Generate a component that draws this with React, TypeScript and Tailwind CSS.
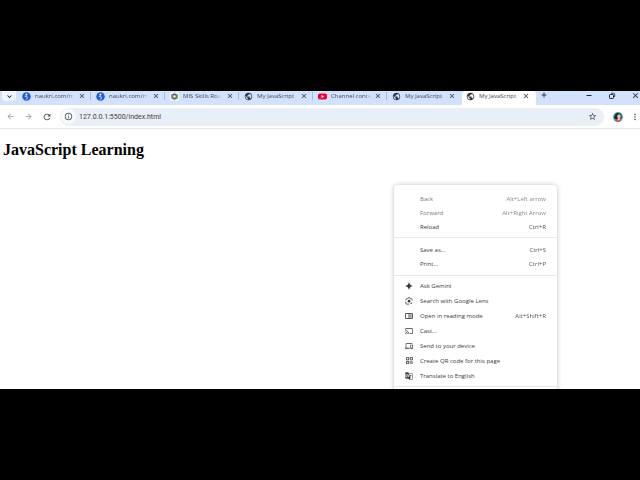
import type { ReactNode } from "react";
import {
  MdArrowBack,
  MdArrowForward,
  MdCast,
  MdClose,
  MdGTranslate,
  MdInfoOutline,
  MdKeyboardArrowDown,
  MdMoreVert,
  MdOutlineDevices,
  MdPublic,
  MdQrCode,
  MdRefresh,
  MdStarBorder,
} from "react-icons/md";

type TabIcon = "naukri" | "mis" | "globe" | "youtube";

const tabs: { icon: TabIcon; title: string; active?: boolean }[] = [
  { icon: "naukri", title: "naukri.com/m" },
  { icon: "naukri", title: "naukri.com/m" },
  { icon: "mis", title: "MIS Skills Roa" },
  { icon: "globe", title: "My JavaScript" },
  { icon: "youtube", title: "Channel conte" },
  { icon: "globe", title: "My JavaScript" },
  { icon: "globe", title: "My JavaScript", active: true },
];

function Favicon({ icon }: { icon: TabIcon }) {
  if (icon === "globe") {
    return <MdPublic className="size-[9px] shrink-0 text-[#2f3944]" />;
  }
  if (icon === "youtube") {
    return (
      <svg viewBox="0 0 18 18" className="size-[9px] shrink-0">
        <rect x="0" y="3" width="18" height="12" rx="3.5" fill="#f00033" />
        <path d="M7 6l5.5 3L7 12z" fill="#fff" />
      </svg>
    );
  }
  if (icon === "mis") {
    return (
      <svg viewBox="0 0 18 18" className="size-[9px] shrink-0">
        <rect width="18" height="18" rx="4" fill="#f3f5f4" />
        <g fill="none" stroke="#59635a" strokeWidth="1.6">
          <ellipse cx="9" cy="9" rx="3.4" ry="6.6" />
          <ellipse cx="9" cy="9" rx="3.4" ry="6.6" transform="rotate(60 9 9)" />
          <ellipse cx="9" cy="9" rx="3.4" ry="6.6" transform="rotate(120 9 9)" />
        </g>
      </svg>
    );
  }
  return (
    <svg viewBox="0 0 18 18" className="size-[9px] shrink-0">
      <circle cx="9" cy="9" r="8.5" fill="#1f5bd8" />
      <circle cx="9" cy="5" r="2" fill="#fff" />
      <path d="M5.5 8.6c3-.6 5 .2 5 2.4 0 1.6-1 2.6-2 4" fill="none" stroke="#fff" strokeWidth="2" />
    </svg>
  );
}

function GeminiIcon() {
  return (
    <svg viewBox="0 0 24 24" className="size-[8px]" fill="currentColor">
      <path d="M12 0c1.6 7.500 4.500 10.400 12 12-7.500 1.600-10.400 4.500-12 12-1.600-7.500-4.500-10.400-12-12C7.500 10.400 10.400 7.500 12 0z" />
    </svg>
  );
}

function LensIcon() {
  return (
    <svg viewBox="0 0 24 24" className="size-[8px]">
      <g fill="none" stroke="currentColor" strokeWidth="2.4">
        <path d="M2.500 10V8a3 3 0 0 1 3-3h2l1.500-2.500h6L16.500 5h2a3 3 0 0 1 3 3v3" />
        <path d="M2.500 14v4.500a3 3 0 0 0 3 3H12" />
      </g>
      <circle cx="12" cy="12.500" r="4" fill="currentColor" />
      <circle cx="18.500" cy="19" r="2.300" fill="currentColor" />
    </svg>
  );
}

function ReadingIcon() {
  return (
    <svg viewBox="0 0 24 24" className="size-[8px]" fill="none" stroke="currentColor" strokeWidth="2.4">
      <path d="M1.500 4.500h21v15h-21zM12 4.500v15" />
      <path d="M14 8.500h6.500M14 12h6.500M14 15.500h6.500" strokeWidth="1.8" />
    </svg>
  );
}

type MenuEntry = {
  label: string;
  shortcut?: string;
  icon?: ReactNode;
  disabled?: boolean;
};

const navItems: MenuEntry[] = [
  { label: "Back", shortcut: "Alt+Left arrow", disabled: true },
  { label: "Forward", shortcut: "Alt+Right Arrow", disabled: true },
  { label: "Reload", shortcut: "Ctrl+R" },
];

const fileItems: MenuEntry[] = [
  { label: "Save as...", shortcut: "Ctrl+S" },
  { label: "Print...", shortcut: "Ctrl+P" },
];

const toolItems: MenuEntry[] = [
  { label: "Ask Gemini", icon: <GeminiIcon /> },
  { label: "Search with Google Lens", icon: <LensIcon /> },
  {
    label: "Open in reading mode",
    shortcut: "Alt+Shift+R",
    icon: <ReadingIcon />,
  },
  { label: "Cast...", icon: <MdCast className="size-[8px]" /> },
  {
    label: "Send to your device",
    icon: <MdOutlineDevices className="size-[8px]" />,
  },
  {
    label: "Create QR code for this page",
    icon: <MdQrCode className="size-[9px]" />,
  },
  {
    label: "Translate to English",
    icon: <MdGTranslate className="size-[8px]" />,
  },
];

function MenuItem({ item, tall }: { item: MenuEntry; tall?: boolean }) {
  return (
    <button
      type="button"
      role="menuitem"
      disabled={item.disabled}
      className={`flex w-full items-center px-[11px] text-left text-[#3a3a3a] disabled:text-[#7c7c7c] ${
        tall ? "h-[15px]" : "h-[14px]"
      }`}
    >
      <span className="flex w-[15px] shrink-0">{item.icon}</span>
      <span className="flex-1">{item.label}</span>
      {item.shortcut && <span className="opacity-90">{item.shortcut}</span>}
    </button>
  );
}

function ContextMenu() {
  return (
    <div
      role="menu"
      className="absolute top-[94px] left-[394px] w-[163px] rounded-t-[4px] bg-white pt-[7px] pb-8 text-[6px] leading-[8px] whitespace-nowrap shadow-[0_0_5px_rgba(0,0,0,0.25)]"
    >
      {navItems.map((item) => (
        <MenuItem key={item.label} item={item} />
      ))}
      <hr className="mt-[3px] mb-[5px] border-[#e9e9e9]" />
      {fileItems.map((item) => (
        <MenuItem key={item.label} item={item} />
      ))}
      <hr className="mt-[4px] mb-[2px] border-[#e9e9e9]" />
      {toolItems.map((item) => (
        <MenuItem key={item.label} item={item} tall />
      ))}
      <hr className="mt-[3px] border-[#e9e9e9]" />
    </div>
  );
}

function TabStrip() {
  return (
    <div className="flex h-[14px] bg-[#d3e2fc]">
      <button
        type="button"
        aria-label="Search tabs"
        className="mr-[2px] ml-[2px] flex h-[10px] w-[14px] items-center justify-center rounded-b-[4px] bg-[#f1f5fd]"
      >
        <MdKeyboardArrowDown className="size-[9px]" />
      </button>
      {tabs.map((tab, idx) => (
        <div
          key={idx}
          className={`flex w-[74px] shrink-0 items-center pr-[6px] pb-[4px] pl-[4px] ${
            tab.active ? "rounded-t-[4px] bg-white" : ""
          }`}
        >
          <Favicon icon={tab.icon} />
          <span
            className={`ml-[4px] text-[6px] leading-[9px] whitespace-nowrap text-[#3f4754] ${
              tab.icon === "globe" ? "" : "mask-r-from-85%"
            }`}
          >
            {tab.title}
          </span>
          <button type="button" aria-label="Close tab" className="ml-auto">
            <MdClose className="size-[8px] text-[#30363f]" />
          </button>
          {idx < 5 && (
            <span className="-mr-[5px] ml-[4px] h-[8px] w-px bg-[#a9b8d4]" />
          )}
        </div>
      ))}
      <button type="button" aria-label="New tab" className="ml-[4px] flex">
        <svg viewBox="0 0 8 8" className="size-[8px]" stroke="#30363f">
          <path d="M4 1.500v5M1.500 4h5" />
        </svg>
      </button>
      <div className="ml-auto flex h-[9px] items-center gap-[15px] text-[#1f2329]">
        <button type="button" aria-label="Minimize">
          <svg viewBox="0 0 8 8" className="size-[8px]" stroke="currentColor">
            <path d="M1.500 3.500h5" />
          </svg>
        </button>
        <button type="button" aria-label="Restore">
          <svg viewBox="0 0 8 8" className="size-[8px]" fill="none" stroke="currentColor">
            <rect x="1.500" y="2.500" width="4" height="4" rx="0.800" />
            <path d="M3 1.300h2.700a1 1 0 0 1 1 1V5" strokeWidth="0.800" />
          </svg>
        </button>
        <button type="button" aria-label="Close window">
          <MdClose className="size-[9px]" />
        </button>
      </div>
    </div>
  );
}

function Toolbar() {
  return (
    <div className="flex h-[24px] items-center border-b border-[#e4e8ee] bg-white pl-[6px] text-[#3c4043]">
      <div className="flex w-[54px] gap-[9px]">
        <button type="button" aria-label="Go back">
          <MdArrowBack className="size-[9px] text-[#9a9da1]" />
        </button>
        <button type="button" aria-label="Go forward">
          <MdArrowForward className="size-[9px] text-[#9a9da1]" />
        </button>
        <button type="button" aria-label="Reload page">
          <MdRefresh className="size-[10px]" />
        </button>
      </div>
      <div className="flex h-[18px] flex-1 items-center rounded-full bg-[#e9eff6] pr-[7px] pl-[1px]">
        <span className="mr-[3px] flex size-[15px] items-center justify-center rounded-full bg-[#f8fafc]">
          <MdInfoOutline className="size-[9px]" />
        </span>
        <input
          type="text"
          aria-label="Address bar"
          defaultValue="127.0.0.1:5500/index.html"
          className="min-w-0 flex-1 bg-transparent font-['Roboto',sans-serif] text-[7px] leading-[10px] outline-none"
        />
        <button type="button" aria-label="Bookmark this page">
          <MdStarBorder className="size-[9px]" />
        </button>
      </div>
      <button type="button" aria-label="Profile" className="ml-[9px]">
        <svg viewBox="0 0 20 20" className="size-[10px] rounded-full">
          <rect width="20" height="20" fill="#3fb3c4" />
          <path d="M2 12C3 5 6 1 12 2c5 1 6 6 5 10l-3 3-6 2z" fill="#2c2023" />
          <ellipse cx="12" cy="9" rx="3.500" ry="4.500" fill="#f3c3b0" />
          <path d="M2 20c1-5 6-7 9-6 4 0 6 3 6 6z" fill="#c9505c" />
          <path d="M9 13l4-1 1 4-4 1z" fill="#f3cdbd" />
        </svg>
      </button>
      <button type="button" aria-label="Menu" className="ml-[7px]">
        <MdMoreVert className="size-[10px]" />
      </button>
    </div>
  );
}

export default function App() {
  return (
    <div className="h-screen bg-black py-[91px] font-['Open_Sans',sans-serif]">
      <div className="relative flex h-full flex-col overflow-hidden bg-white">
        <TabStrip />
        <Toolbar />
        <main className="flex-1 px-[3px] pt-[11px]">
          <h1 className="font-['Liberation_Serif',serif] text-[16px] leading-[20px] font-bold text-black">
            JavaScript Learning
          </h1>
        </main>
        <ContextMenu />
      </div>
    </div>
  );
}
